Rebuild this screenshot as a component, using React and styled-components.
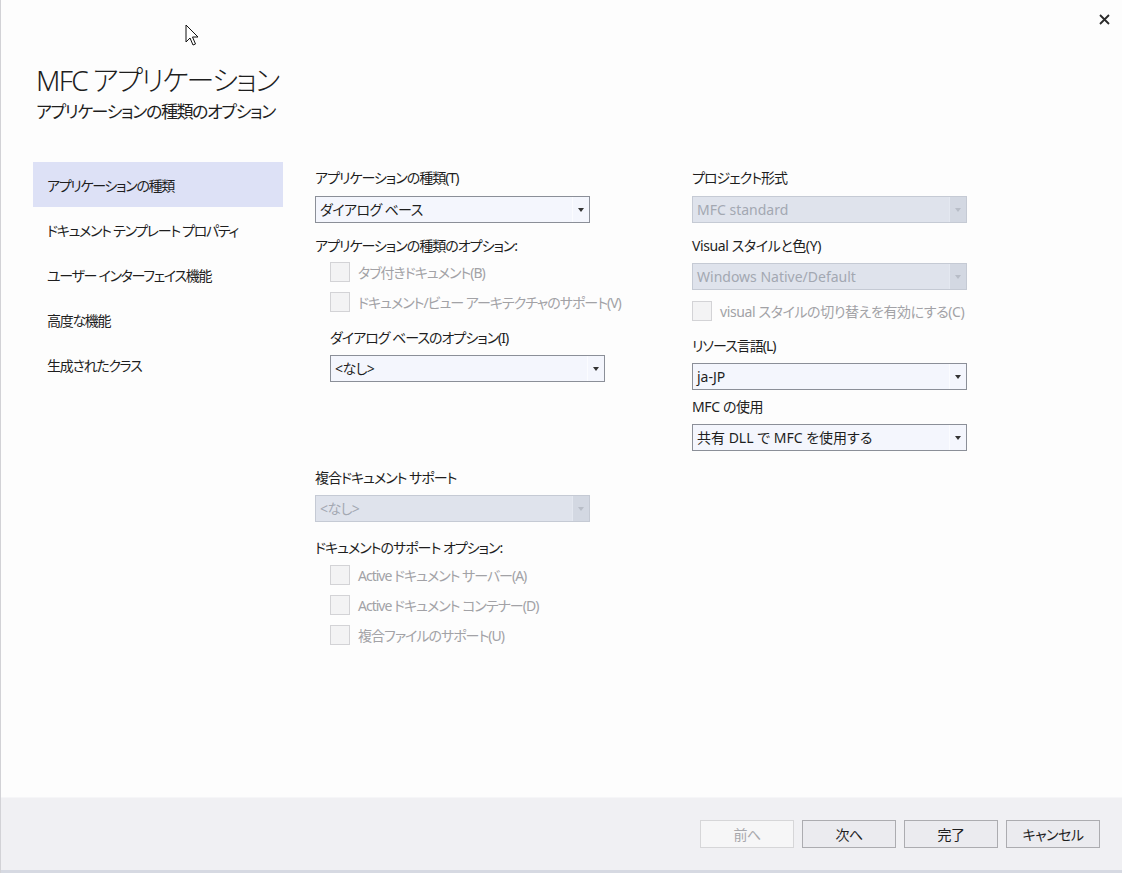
import React from "react";
import styled, { createGlobalStyle } from "styled-components";

const GlobalStyle = createGlobalStyle`
  html, body {
    margin: 0;
    padding: 0;
    background: #fdfdfd;
  }
  * {
    box-sizing: border-box;
  }
`;

const Window = styled.div`
  position: relative;
  width: 1122px;
  height: 873px;
  display: flex;
  flex-direction: column;
  background: #fdfdfd;
  border-left: 1px solid #d2d2d6;
  font-family: "Noto Sans", "Noto Sans CJK JP", sans-serif;
  font-feature-settings: "palt";
  color: #1e1e1e;
`;

const CloseButton = styled.div`
  position: absolute;
  top: 13px;
  right: 11px;
  width: 13px;
  height: 13px;
  display: flex;
  align-items: center;
  justify-content: center;
`;

const Cursor = styled.div`
  position: absolute;
  top: 24px;
  left: 184px;
  width: 16px;
  height: 24px;
`;

const Header = styled.div`
  padding: 61px 0 0 35px;
  display: flex;
  flex-direction: column;
`;

const Title = styled.h1`
  margin: 0;
  font-size: 28px;
  font-weight: 300;
  line-height: 38px;
  letter-spacing: -1.7px;
`;

const Subtitle = styled.div`
  font-size: 17px;
  line-height: 24px;
  margin-top: 1px;
  letter-spacing: -1.4px;
`;

const Body = styled.div`
  flex: 1;
  display: flex;
  padding: 38px 0 0 32px;
`;

const Nav = styled.div`
  width: 250px;
  display: flex;
  flex-direction: column;
`;

const NavItem = styled.div`
  height: 45px;
  display: flex;
  align-items: center;
  padding-left: 14px;
  font-size: 14px;
  letter-spacing: -1.3px;
  background: ${(p) => (p.$active ? "#dde1f6" : "transparent")};
`;

const Form = styled.div`
  display: grid;
  grid-template-columns: 377px 275px;
  margin-left: 32px;
  padding-top: 6px;
`;

const Column = styled.div`
  display: flex;
  flex-direction: column;
`;

const Label = styled.div`
  font-size: 14px;
  line-height: 20px;
  height: 20px;
  white-space: nowrap;
  letter-spacing: ${(p) => (p.$tight ? -0.4 : -1)}px;
  margin-top: ${(p) => p.$mt || 0}px;
  padding-left: ${(p) => p.$indent || 0}px;
`;

const SelectBox = styled.div`
  width: 275px;
  height: 27px;
  display: flex;
  margin-top: ${(p) => p.$mt || 0}px;
  margin-left: ${(p) => p.$indent || 0}px;
  border: 1px solid ${(p) => (p.$disabled ? "#c5cad4" : "#8b8f98")};
  background: ${(p) => (p.$disabled ? "#dfe3ec" : "#f4f6fd")};
  color: ${(p) => (p.$disabled ? "#a3a8b2" : "#1e1e1e")};
`;

const SelectValue = styled.div`
  flex: 1;
  padding-left: 4px;
  font-size: 14px;
  line-height: 25px;
  white-space: nowrap;
  letter-spacing: ${(p) => (p.$latin ? 0 : -0.6)}px;
`;

const SelectArrow = styled.div`
  width: 17px;
  display: flex;
  align-items: center;
  justify-content: center;
  border-left: 1px solid ${(p) => (p.$disabled ? "#e4e8f0" : "#fbfcff")};
  background: ${(p) => (p.$disabled ? "#d3d8e2" : "#f4f6fd")};
  &::after {
    content: "";
    border-left: 3.5px solid transparent;
    border-right: 3.5px solid transparent;
    border-top: 4px solid ${(p) => (p.$disabled ? "#b8bdc7" : "#333")};
  }
`;

const CheckRow = styled.div`
  height: 30px;
  display: flex;
  align-items: center;
  gap: 8px;
  margin-top: ${(p) => p.$mt || 0}px;
  padding-left: ${(p) => p.$indent || 0}px;
  font-size: 14px;
  letter-spacing: ${(p) => (p.$tight ? -0.4 : -1)}px;
  color: #a2a2a6;
  white-space: nowrap;
`;

const CheckBox = styled.span`
  width: 20px;
  height: 20px;
  border: 1px solid #d3d3d6;
  background: #f3f3f4;
  flex-shrink: 0;
`;

const Footer = styled.div`
  height: 76px;
  display: flex;
  align-items: center;
  justify-content: flex-end;
  gap: 8px;
  padding: 0 22px 0 0;
  background: #f0f0f3;
  border-top: 1px solid #f6f6f8;
  border-bottom: 3px solid #d6d9e2;
`;

const Button = styled.div`
  width: 94px;
  height: 28px;
  display: flex;
  align-items: center;
  justify-content: center;
  font-size: 14px;
  letter-spacing: -0.5px;
  border: 1px solid ${(p) => (p.$disabled ? "#d6d6d8" : "#acacb0")};
  background: ${(p) => (p.$disabled ? "#f6f6f7" : "#ebebef")};
  color: ${(p) => (p.$disabled ? "#a8a8ac" : "#1e1e1e")};
`;

const Select = ({ value, disabled, mt, indent, latin }) => (
  <SelectBox $disabled={disabled} $mt={mt} $indent={indent}>
    <SelectValue $latin={latin}>{value}</SelectValue>
    <SelectArrow $disabled={disabled} />
  </SelectBox>
);

const Check = ({ label, mt, indent, tight }) => (
  <CheckRow $mt={mt} $indent={indent} $tight={tight}>
    <CheckBox />
    {label}
  </CheckRow>
);

const navItems = [
  "アプリケーションの種類",
  "ドキュメント テンプレート プロパティ",
  "ユーザー インターフェイス機能",
  "高度な機能",
  "生成されたクラス",
];

const App = () => {
  return (
    <>
      <GlobalStyle />
      <Window>
        <Cursor>
          <svg width="16" height="24" viewBox="0 0 16 24">
            <path
              d="M1 1 L1 18 L5 14 L8 21 L10.5 20 L7.5 13 L13 13 Z"
              fill="#fff"
              stroke="#111"
              strokeWidth="1"
              strokeLinejoin="miter"
            />
          </svg>
        </Cursor>
        <CloseButton>
          <svg width="11" height="11" viewBox="0 0 11 11">
            <path d="M1 1 L10 10 M10 1 L1 10" stroke="#2a2a2a" strokeWidth="1.8" />
          </svg>
        </CloseButton>
        <Header>
          <Title>MFC アプリケーション</Title>
          <Subtitle>アプリケーションの種類のオプション</Subtitle>
        </Header>
        <Body>
          <Nav>
            {navItems.map((item, i) => (
              <NavItem key={item} $active={i === 0}>
                {item}
              </NavItem>
            ))}
          </Nav>
          <Form>
            <Column>
              <Label>アプリケーションの種類(T)</Label>
              <Select value="ダイアログ ベース" mt={8} />
              <Label $mt={13}>アプリケーションの種類のオプション:</Label>
              <Check label="タブ付きドキュメント(B)" mt={1} indent={15} />
              <Check label="ドキュメント/ビュー アーキテクチャのサポート(V)" indent={15} />
              <Label $mt={11} $indent={15}>ダイアログ ベースのオプション(I)</Label>
              <Select value="<なし>" mt={7} indent={15} />
              <Label $mt={86}>複合ドキュメント サポート</Label>
              <Select value="<なし>" disabled mt={7} />
              <Label $mt={16}>ドキュメントのサポート オプション:</Label>
              <Check label="Active ドキュメント サーバー(A)" mt={2} indent={15} />
              <Check label="Active ドキュメント コンテナー(D)" indent={15} />
              <Check label="複合ファイルのサポート(U)" indent={15} />
            </Column>
            <Column>
              <Label>プロジェクト形式</Label>
              <Select value="MFC standard" disabled latin mt={8} />
              <Label $mt={13} $tight>Visual スタイルと色(Y)</Label>
              <Select value="Windows Native/Default" disabled latin mt={7} />
              <Check label="visual スタイルの切り替えを有効にする(C)" mt={6} tight />
              <Label $mt={10}>リソース言語(L)</Label>
              <Select value="ja-JP" latin mt={7} />
              <Label $mt={7} $tight>MFC の使用</Label>
              <Select value="共有 DLL で MFC を使用する" latin mt={7} />
            </Column>
          </Form>
        </Body>
        <Footer>
          <Button $disabled>前へ</Button>
          <Button>次へ</Button>
          <Button>完了</Button>
          <Button>キャンセル</Button>
        </Footer>
      </Window>
    </>
  );
};

export default App;
